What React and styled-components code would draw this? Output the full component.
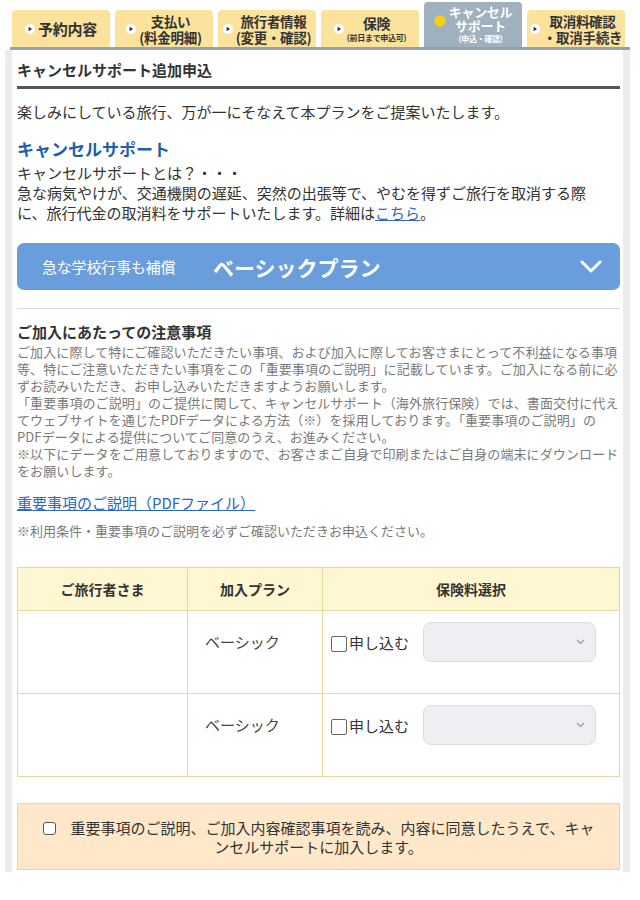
import React from 'react';
import styled, { createGlobalStyle } from 'styled-components';

const GlobalStyle = createGlobalStyle`
  body {
    margin: 0;
    background: #fff;
    font-family: "Noto Sans CJK JP", "Liberation Sans", sans-serif;
    color: #333;
  }
`;

const Page = styled.div`
  width: 640px;
`;

const TabBar = styled.div`
  display: flex;
  align-items: flex-end;
  gap: 5px;
  padding: 2px 12px 0 12px;
  height: 45px;
`;

const Tab = styled.div`
  width: 98px;
  height: ${(p) => (p.$active ? 45 : 37)}px;
  background: ${(p) => (p.$active ? '#9fb1bf' : '#fbe29d')};
  border-radius: 4px 4px 0 0;
  display: flex;
  align-items: center;
  justify-content: center;
  gap: 3px;
  color: ${(p) => (p.$active ? '#fff' : '#333')};
  font-weight: bold;
  box-sizing: border-box;
`;

const TabText = styled.div`
  text-align: center;
  font-size: ${(p) => p.$size || 13.5}px;
  line-height: ${(p) => p.$lh || 16}px;
  letter-spacing: -0.3px;
  white-space: nowrap;
`;

const TabSmall = styled.div`
  font-size: 8px;
  line-height: 11px;
  font-weight: bold;
  letter-spacing: -0.3px;
`;

const TabLine = styled.div`
  height: 3px;
  margin: 0 10px;
  background: #8fa3b3;
`;

const Panel = styled.div`
  margin: 0 10px 0 5px;
  border-left: 7px solid #ececec;
  border-right: 7px solid #ececec;
  padding: 0 3px 2px 5px;
`;

const Heading = styled.h2`
  margin: 0;
  padding: 10px 0 6px;
  font-size: 15px;
  line-height: 20px;
  font-weight: bold;
  color: #333;
  border-bottom: 3px solid #555;
`;

const Lead = styled.p`
  margin: 13px 0 0;
  font-size: 15px;
  line-height: 20px;
  color: #333;
`;

const BlueTitle = styled.h3`
  margin: 15px 0 0;
  font-size: 17px;
  line-height: 24px;
  font-weight: bold;
  color: #1d5fae;
`;

const Body = styled.p`
  margin: 2px 0 0;
  font-size: 15px;
  line-height: 20px;
  color: #333;
`;

const Link = styled.a`
  color: #2a66c2;
  text-decoration: underline;
  font-size: ${(p) => p.$size || 15}px;
`;

const PlanBar = styled.div`
  margin-top: 20px;
  height: 47px;
  border-radius: 7px;
  background: #6a9ddb;
  display: flex;
  align-items: center;
  padding: 0 18px 0 25px;
  color: #fff;
`;

const PlanSub = styled.span`
  font-size: 15px;
  letter-spacing: -0.2px;
  width: 171px;
`;

const PlanName = styled.span`
  font-size: 21px;
  font-weight: bold;
  flex: 1;
`;

const Rule = styled.hr`
  margin: 18px 0 0;
  border: none;
  border-top: 1px solid #d9d9d9;
`;

const SubHeading = styled.h4`
  margin: 13px 0 0;
  font-size: 15px;
  line-height: 20px;
  font-weight: bold;
  color: #333;
`;

const Notes = styled.p`
  margin: 1px 0 0;
  font-size: 13px;
  line-height: 17px;
  letter-spacing: 0.1px;
  color: #7a7a7a;
  white-space: nowrap;
`;

const LinkRow = styled.div`
  margin-top: 13px;
  line-height: 20px;
`;

const SmallNote = styled.p`
  margin: 9px 0 0;
  font-size: 13px;
  line-height: 18px;
  color: #7a7a7a;
`;

const Table = styled.table`
  margin-top: 27px;
  width: 100%;
  border-collapse: collapse;
  border: 1px solid #e8d79f;
`;

const Th = styled.th`
  height: 42px;
  padding: 0;
  background: #fff6d2;
  border: 1px solid #e8d79f;
  font-size: 14px;
  font-weight: bold;
  color: #333;
  width: ${(p) => (p.$w ? `${p.$w}px` : 'auto')};
`;

const Td = styled.td`
  height: 71px;
  border: 1px solid #e8d79f;
  vertical-align: top;
  padding: 11px 0 0 ${(p) => p.$pl || 0}px;
  font-size: 15px;
  color: #444;
`;

const PlanCell = styled.div`
  line-height: 40px;
`;

const ApplyRow = styled.div`
  display: flex;
  align-items: center;
  height: 40px;
`;

const Check = styled.input.attrs({ type: 'checkbox' })`
  appearance: none;
  margin: 4px 2px 0 0;
  width: ${(p) => p.$size || 16}px;
  height: ${(p) => p.$size || 16}px;
  border: 1px solid #666;
  border-radius: ${(p) => p.$radius || 2}px;
  background: #fff;
  flex-shrink: 0;
  vertical-align: middle;
`;

const ApplyLabel = styled.span`
  font-size: 15px;
  color: #333;
  width: 74px;
`;

const Select = styled.div`
  width: 173px;
  height: 40px;
  box-sizing: border-box;
  background: #efeff3;
  border: 1px solid #dcdce2;
  border-radius: 8px;
  display: flex;
  align-items: center;
  justify-content: flex-end;
  padding-right: 10px;
`;

const AgreeBox = styled.div`
  margin-top: 26px;
  background: #fee8c9;
  border: 1px solid #ecd59f;
  padding: 15px 22px 13px;
  text-align: center;
  font-size: 15px;
  line-height: 18px;
  color: #333;
`;

const AgreeCheck = styled(Check)`
  margin: 0 15px 3px 0;
  width: 13px;
  height: 13px;
  border-color: #555;
  border-radius: 3px;
`;

const ArrowIcon = () => (
  <svg width="10" height="10" viewBox="0 0 10 10" style={{ flexShrink: 0 }}>
    <circle cx="5" cy="5" r="5" fill="#fff" />
    <polygon points="3.6,2.8 7,5 3.6,7.2" fill="#1c2b59" />
  </svg>
);

const Dot = () => (
  <svg width="12" height="12" viewBox="0 0 12 12" style={{ flexShrink: 0, marginTop: -8 }}>
    <circle cx="6" cy="6" r="5.5" fill="#f7d20a" />
  </svg>
);

const Chevron = () => (
  <svg width="22" height="13" viewBox="0 0 22 13">
    <polyline points="2,2 11,11 20,2" fill="none" stroke="#fff" strokeWidth="3" strokeLinecap="round" strokeLinejoin="round" />
  </svg>
);

const SmallChevron = () => (
  <svg width="9" height="6" viewBox="0 0 9 6">
    <polyline points="1,1 4.5,4.5 8,1" fill="none" stroke="#999" strokeWidth="1.2" />
  </svg>
);

const travelers = ['', ''];

export default function App() {
  return (
    <Page>
      <GlobalStyle />
      <TabBar>
        <Tab>
          <ArrowIcon />
          <TabText $size={15} $lh={20}>予約内容</TabText>
        </Tab>
        <Tab>
          <ArrowIcon />
          <TabText>支払い<br />(料金明細)</TabText>
        </Tab>
        <Tab>
          <ArrowIcon />
          <TabText>旅行者情報<br />(変更・確認)</TabText>
        </Tab>
        <Tab>
          <ArrowIcon />
          <TabText $size={14} $lh={17}>
            保険
            <TabSmall>(前日まで申込可)</TabSmall>
          </TabText>
        </Tab>
        <Tab $active>
          <Dot />
          <TabText $size={13} $lh={14}>
            キャンセル<br />サポート
            <TabSmall>(申込・確認)</TabSmall>
          </TabText>
        </Tab>
        <Tab>
          <ArrowIcon />
          <TabText>取消料確認<br />・取消手続き</TabText>
        </Tab>
      </TabBar>
      <TabLine />
      <Panel>
        <Heading>キャンセルサポート追加申込</Heading>
        <Lead>楽しみにしている旅行、万が一にそなえて本プランをご提案いたします。</Lead>
        <BlueTitle>キャンセルサポート</BlueTitle>
        <Body>
          キャンセルサポートとは？・・・<br />
          急な病気やけが、交通機関の遅延、突然の出張等で、やむを得ずご旅行を取消する際<br />
          に、旅行代金の取消料をサポートいたします。詳細は<Link href="#">こちら</Link>。
        </Body>
        <PlanBar>
          <PlanSub>急な学校行事も補償</PlanSub>
          <PlanName>ベーシックプラン</PlanName>
          <Chevron />
        </PlanBar>
        <Rule />
        <SubHeading>ご加入にあたっての注意事項</SubHeading>
        <Notes>
          ご加入に際して特にご確認いただきたい事項、および加入に際してお客さまにとって不利益になる事項<br />
          等、特にご注意いただきたい事項をこの「重要事項のご説明」に記載しています。ご加入になる前に必<br />
          ずお読みいただき、お申し込みいただきますようお願いします。<br />
          「重要事項のご説明」のご提供に関して、キャンセルサポート（海外旅行保険）では、書面交付に代え<br />
          てウェブサイトを通じたPDFデータによる方法（※）を採用しております。「重要事項のご説明」の<br />
          PDFデータによる提供についてご同意のうえ、お進みください。<br />
          ※以下にデータをご用意しておりますので、お客さまご自身で印刷またはご自身の端末にダウンロード<br />
          をお願いします。
        </Notes>
        <LinkRow>
          <Link href="#">重要事項のご説明（PDFファイル）</Link>
        </LinkRow>
        <SmallNote>※利用条件・重要事項のご説明を必ずご確認いただきお申込ください。</SmallNote>
        <Table>
          <thead>
            <tr>
              <Th $w={169}>ご旅行者さま</Th>
              <Th $w={134}>加入プラン</Th>
              <Th>保険料選択</Th>
            </tr>
          </thead>
          <tbody>
            {travelers.map((name, i) => (
              <tr key={i}>
                <Td $pl={10}>{name}</Td>
                <Td $pl={17}>
                  <PlanCell>ベーシック</PlanCell>
                </Td>
                <Td $pl={8}>
                  <ApplyRow>
                    <Check />
                    <ApplyLabel>申し込む</ApplyLabel>
                    <Select>
                      <SmallChevron />
                    </Select>
                  </ApplyRow>
                </Td>
              </tr>
            ))}
          </tbody>
        </Table>
        <AgreeBox>
          <AgreeCheck />
          重要事項のご説明、ご加入内容確認事項を読み、内容に同意したうえで、キャンセルサポートに加入します。
        </AgreeBox>
      </Panel>
    </Page>
  );
}
